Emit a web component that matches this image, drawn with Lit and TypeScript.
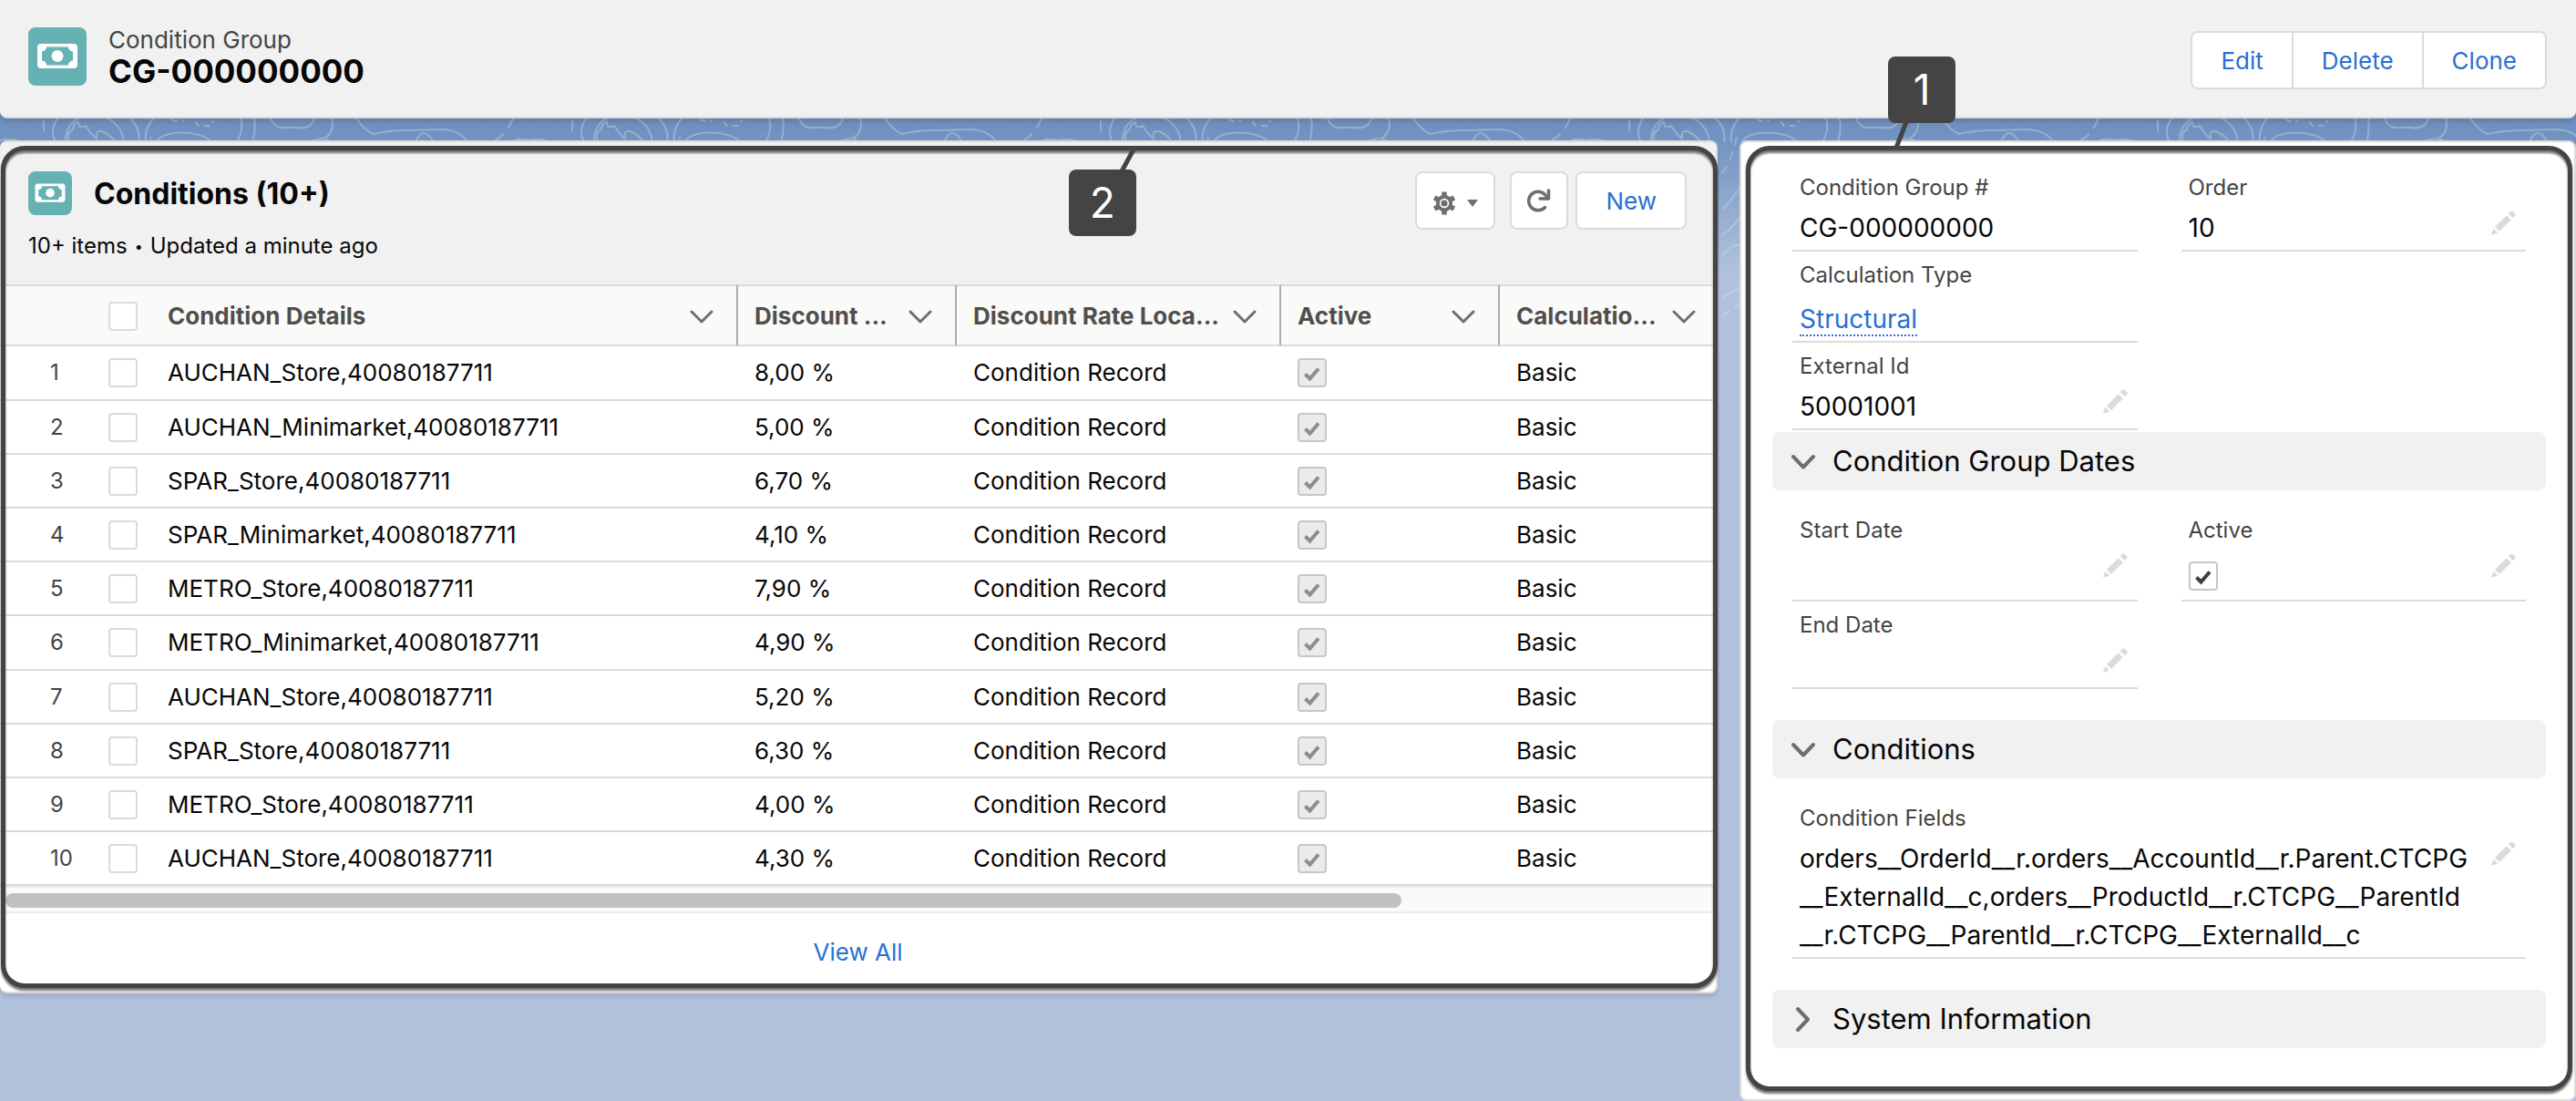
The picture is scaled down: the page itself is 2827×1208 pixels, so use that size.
import { LitElement, html, svg, css, nothing } from "lit";
import type { TemplateResult } from "lit";
import { customElement, property } from "lit/decorators.js";

interface ConditionRow {
  name: string;
  rate: string;
}

const ROWS: ConditionRow[] = [
  { name: "AUCHAN_Store,40080187711", rate: "8,00 %" },
  { name: "AUCHAN_Minimarket,40080187711", rate: "5,00 %" },
  { name: "SPAR_Store,40080187711", rate: "6,70 %" },
  { name: "SPAR_Minimarket,40080187711", rate: "4,10 %" },
  { name: "METRO_Store,40080187711", rate: "7,90 %" },
  { name: "METRO_Minimarket,40080187711", rate: "4,90 %" },
  { name: "AUCHAN_Store,40080187711", rate: "5,20 %" },
  { name: "SPAR_Store,40080187711", rate: "6,30 %" },
  { name: "METRO_Store,40080187711", rate: "4,00 %" },
  { name: "AUCHAN_Store,40080187711", rate: "4,30 %" },
];

const COLUMNS = [
  "Condition Details",
  "Discount ...",
  "Discount Rate Loca...",
  "Active",
  "Calculatio...",
];

const cashIcon = svg`
  <rect x="10" y="18" width="44" height="27" rx="4" fill="#fff"></rect>
  <path d="M20 21.500h24a5 5 0 0 0 5 5v10a5 5 0 0 0-5 5H20a5 5 0 0 0-5-5v-10a5 5 0 0 0 5-5z" fill="#65b1b4"></path>
  <circle cx="32" cy="31.500" r="6.500" fill="#fff"></circle>`;

const base = css`
  * {
    box-sizing: border-box;
  }
  button {
    font: inherit;
    margin: 0;
    padding: 0;
    border: 0;
    background: none;
    cursor: pointer;
  }
  a {
    color: #2a6fd1;
    text-decoration: none;
  }
  h1,
  h2,
  h3,
  p,
  dl,
  dd,
  dt {
    margin: 0;
    font-weight: 400;
  }
  svg {
    display: block;
    flex: none;
  }
  input[type="checkbox"] {
    appearance: none;
    display: block;
    flex: none;
    width: 32px;
    height: 32px;
    margin: 0;
    border: 2px solid #dcdbda;
    border-radius: 4px;
    background: #fff;
  }
`;

/** Square teal object icon with the banknote symbol. */
@customElement("object-icon")
export class ObjectIcon extends LitElement {
  static styles = css`
    :host {
      display: block;
      flex: none;
      width: 64px;
      height: 64px;
      border-radius: 8px;
      background: #65b1b4;
    }
    :host([small]) {
      width: 48px;
      height: 48px;
    }
    svg {
      display: block;
      width: 100%;
      height: 100%;
    }
  `;
  render() {
    return html`<svg viewBox="0 0 64 64" aria-hidden="true">${cashIcon}</svg>`;
  }
}

/** Numbered callout: an outline round its parent panel and a badge tied to it by a line. */
@customElement("panel-callout")
export class PanelCallout extends LitElement {
  @property() label = "";
  @property({ reflect: true }) placement = "inside";

  static styles = css`
    :host {
      position: absolute;
      inset: 4px -2px 4px 1px;
      pointer-events: none;
    }
    :host([placement="above"]) {
      inset: 4px 2px 9px 5px;
    }
    .outline {
      position: absolute;
      inset: 0;
      border: 5px solid #444;
      border-radius: 26px;
      filter: drop-shadow(0 3px 1px rgba(60, 60, 60, 0.7));
    }
    .badge {
      position: absolute;
      left: 62.2%;
      top: 26px;
      width: 74px;
      height: 73px;
      border-radius: 8px;
      background: #444;
      color: #fff;
      font-size: 46px;
      line-height: 73px;
      text-align: center;
    }
    .line {
      position: absolute;
      left: 56px;
      top: -22px;
      overflow: visible;
    }
    :host([placement="above"]) .badge {
      left: 156px;
      top: -98px;
    }
    :host([placement="above"]) .line {
      left: 0;
      top: 72px;
    }
  `;
  render() {
    const up = this.placement === "above";
    return html`<div class="outline"></div>
      <div class="badge">
        ${this.label}
        <svg class="line" width="20" height="26" aria-hidden="true">
          <path d=${up ? "M20 0L9 28" : "M2 24L15 0"} stroke="#444" stroke-width="5"></path>
        </svg>
      </div>`;
  }
}

/** Grey collapsible heading in the detail panel. */
@customElement("section-heading")
export class SectionHeading extends LitElement {
  @property() label = "";
  @property({ type: Boolean }) collapsed = false;

  static styles = [
    base,
    css`
      :host {
        display: block;
      }
      .bar {
        display: flex;
        align-items: center;
        gap: 18px;
        width: 100%;
        height: 64px;
        padding: 0 20px;
        border-radius: 8px;
        background: #f1f1f1;
        color: #080707;
        font-size: 31px;
        line-height: 40px;
      }
    `,
  ];
  render() {
    return html`<h3>
      <button class="bar" type="button" aria-expanded=${this.collapsed ? "false" : "true"}>
        <svg width="28" height="28" viewBox="0 0 28 28" fill="none" stroke="#706e6b" stroke-width="4" stroke-linecap="round" stroke-linejoin="round" aria-hidden="true">
          <path d=${this.collapsed ? "M8 3l11 11.500L8 26" : "M3 9l11 11.500L25 9"}></path>
        </svg>
        ${this.label}
      </button>
    </h3>`;
  }
}

/** The related list of conditions. */
@customElement("conditions-list")
export class ConditionsList extends LitElement {
  static styles = [
    base,
    css`
      :host {
        display: block;
        position: relative;
        min-width: 0;
        border: 2px solid #dddbda;
        border-left: 0;
        border-radius: 8px;
        background: #fff;
        box-shadow: 0 4px 4px rgba(0, 0, 0, 0.1);
      }
      .card {
        overflow: hidden;
        border-radius: 8px;
      }
      .head {
        display: flex;
        justify-content: space-between;
        align-items: flex-start;
        padding: 32px 32px 26px 31px;
        background: #f1f1f1;
      }
      .title {
        display: flex;
        align-items: center;
        gap: 24px;
        margin-bottom: 18px;
      }
      h2 {
        padding-top: 2px;
        color: #080707;
        font-size: 32px;
        line-height: 40px;
        font-weight: 700;
      }
      .status {
        display: flex;
        align-items: center;
        gap: 8px;
        color: #080707;
        font-size: 24px;
        line-height: 32px;
      }
      .dot {
        font-size: 16px;
      }
      .actions {
        display: flex;
        gap: 8px;
      }
      .btn {
        display: flex;
        align-items: center;
        justify-content: center;
        gap: 12px;
        height: 64px;
        border: 2px solid #dddbda;
        border-radius: 8px;
        background: #fff;
        color: #2a6fd1;
        font-size: 26px;
      }
      .gear {
        width: 88px;
        margin-right: 8px;
        padding-top: 6px;
      }
      .refresh {
        width: 64px;
      }
      .new {
        padding: 0 31px;
      }
      table {
        width: calc(100% + 3px);
        table-layout: fixed;
        border-collapse: separate;
        border-spacing: 0;
        color: #080707;
        font-size: 26px;
        line-height: 36px;
      }
      .c-num {
        width: 101px;
      }
      .c-check {
        width: 65px;
      }
      .c-std {
        width: 240px;
      }
      .c-wide {
        width: 356px;
      }
      th,
      td {
        height: 59px;
        padding: 0 18px;
        border-bottom: 2px solid #dddbda;
        text-align: left;
        font-weight: 400;
        white-space: nowrap;
      }
      tr:nth-child(5n + 1) td {
        height: 60px;
      }
      thead th {
        height: 68px;
        padding-top: 2px;
        padding-right: 0;
        border-top: 2px solid #dddbda;
        background: #fafaf9;
        color: #514f4d;
        font-weight: 700;
      }
      .ruled {
        border-right: 2px solid #aeacaa;
      }
      .label {
        display: flex;
        align-items: center;
        justify-content: space-between;
        padding-right: 25px;
      }
      td.num {
        padding: 0 0 0 55px;
        color: #444;
        font-size: 24px;
      }
      input:disabled {
        border-color: #c9c7c5;
        background-color: #ecebea;
      }
      .tick {
        display: grid;
        width: 32px;
      }
      .tick > * {
        grid-area: 1 / 1;
      }
      .track {
        padding: 6px 0 4px 6px;
        border-top: 2px solid #ececec;
        border-bottom: 2px solid #ececec;
        background: #fafafa;
      }
      .thumb {
        width: 81.6%;
        height: 16px;
        border-radius: 8px;
        background: #c1c1c1;
      }
      .foot {
        padding: 25px 0;
        text-align: center;
        font-size: 26px;
        line-height: 36px;
      }
    `,
  ];

  private chevron() {
    return html`<svg width="26" height="26" viewBox="0 0 26 26" fill="none" stroke="#706e6b" stroke-width="3" stroke-linecap="round" stroke-linejoin="round" aria-hidden="true">
      <path d="M2 8l11 11L24 8"></path>
    </svg>`;
  }

  render() {
    return html`
      <div class="card">
        <div class="head">
          <div>
            <div class="title">
              <object-icon small></object-icon>
              <h2>Conditions (10+)</h2>
            </div>
            <p class="status">10+ items <span class="dot">•</span> Updated a minute ago</p>
          </div>
          <div class="actions">
            <button class="btn gear" type="button" aria-label="List settings">
              <svg width="26" height="26" viewBox="0 0 26 26" fill="none" stroke="#706e6b" aria-hidden="true">
                <path d="M13 0.500V6M13 20V25.500M2.200 6.800L7 9.500M19 16.500L23.800 19.200M2.200 19.200L7 16.500M19 9.500L23.800 6.800" stroke-width="5.500" stroke-linecap="butt"></path>
                <circle cx="13" cy="13" r="7.200" stroke-width="4"></circle>
                <circle cx="13" cy="13" r="3.600" fill="#706e6b" stroke="none"></circle>
              </svg>
              <svg width="12" height="8" viewBox="0 0 12 8" aria-hidden="true"><path d="M0 0h12L6 8z" fill="#706e6b"></path></svg>
            </button>
            <button class="btn refresh" type="button" aria-label="Refresh">
              <svg width="26" height="36" viewBox="0 0 26 36" fill="none" stroke="#706e6b" aria-hidden="true">
                <path d="M19.500 25.500A10.300 10.300 0 1 1 19.500 11.500" stroke-width="3.500" stroke-linecap="round"></path>
                <path d="M23.500 7V16H14" stroke-width="3.500" stroke-linecap="round" stroke-linejoin="round"></path>
                <path d="M23 10V16H17z" fill="#706e6b" stroke="none"></path>
              </svg>
            </button>
            <button class="btn new" type="button">New</button>
          </div>
        </div>
        <table>
          <colgroup>
            <col class="c-num" />
            <col class="c-check" />
            <col />
            <col class="c-std" />
            <col class="c-wide" />
            <col class="c-std" />
            <col class="c-std" />
          </colgroup>
          <thead>
            <tr>
              <th></th>
              <th><input type="checkbox" aria-label="Select all" /></th>
              ${COLUMNS.map(
                (c, i) => html`<th scope="col" class=${i < 4 ? "ruled" : nothing}>
                  <div class="label">${c}${this.chevron()}</div>
                </th>`,
              )}
            </tr>
          </thead>
          <tbody>
            ${ROWS.map(
              (r, i) => html`<tr>
                <td class="num">${i + 1}</td>
                <td><input type="checkbox" aria-label="Select ${r.name}" /></td>
                <td>${r.name}</td>
                <td>${r.rate}</td>
                <td>Condition Record</td>
                <td>
                  <div class="tick">
                    <input type="checkbox" checked disabled aria-label="Active" />
                    <svg width="32" height="32" viewBox="0 0 32 32" fill="none" stroke="#8f8d8b" stroke-width="4" aria-hidden="true">
                      <path d="M8.500 17.500l5 5L23 11.500"></path>
                    </svg>
                  </div>
                </td>
                <td>Basic</td>
              </tr>`,
            )}
          </tbody>
        </table>
        <div class="track"><div class="thumb"></div></div>
        <div class="foot"><a href="#all">View All</a></div>
      </div>
      <panel-callout label="2"></panel-callout>
    `;
  }
}

/** Record details, grouped in sections. */
@customElement("record-details")
export class RecordDetails extends LitElement {
  static styles = [
    base,
    css`
      :host {
        display: block;
        position: relative;
        min-width: 0;
        padding: 24px 31px 56px 34px;
        border: 2px solid #dddbda;
        border-radius: 8px;
        background: #fff;
      }
      .fields {
        display: grid;
        grid-template-columns: minmax(0, 1fr) minmax(0, 1fr);
        column-gap: 48px;
        padding: 0 22px;
      }
      .first {
        padding-bottom: 2px;
      }
      .group {
        padding-top: 18px;
        padding-bottom: 34px;
      }
      .field {
        grid-column: 1;
        display: flex;
        flex-direction: column;
        min-height: 96px;
        padding: 8px 8px 3px;
        border-bottom: 2px solid #dddbda;
      }
      .right {
        grid-column: 2;
      }
      .full {
        grid-column: 1 / -1;
      }
      dt {
        margin-bottom: 5px;
        color: #444;
        font-size: 24px;
        line-height: 36px;
      }
      dd {
        display: flex;
        justify-content: space-between;
        align-items: flex-start;
        gap: 16px;
        min-height: 42px;
        color: #080707;
        font-size: 28px;
        line-height: 42px;
      }
      .linked {
        padding: 8px 0 2px;
      }
      .linked a {
        line-height: 34px;
        border-bottom: 2px dotted #2a6fd1;
      }
      .edit {
        margin: 2px 3px 0 0;
      }
      .check {
        display: grid;
        width: 32px;
        margin: 11px 0 7px;
      }
      .check > * {
        grid-area: 1 / 1;
      }
      .check input {
        border-color: #c9c7c5;
      }
    `,
  ];

  private pencil(field: string) {
    return html`<button class="edit" type="button" aria-label="Edit ${field}">
      <svg width="28" height="28" viewBox="0 0 28 28" fill="#dddbda" aria-hidden="true">
        <path d="M19.800 3.200l2.300-2.300a1.800 1.800 0 0 1 2.600 0l2.400 2.400a1.800 1.800 0 0 1 0 2.600l-2.300 2.300z"></path>
        <path d="M17.800 5.200l5 5L10 23l-5-5z"></path>
        <path d="M3.400 19.700l4.900 4.900-5.800 2a1 1 0 0 1-1.200-1.200z"></path>
      </svg>
    </button>`;
  }

  private field(label: string, value: unknown, edit: boolean, cls = "") {
    return html`<div class="field ${cls}">
      <dt>${label}</dt>
      <dd><span>${value}</span>${edit ? this.pencil(label) : nothing}</dd>
    </div>`;
  }

  render(): TemplateResult {
    return html`
      <dl class="fields first">
        ${this.field("Condition Group #", "CG-000000000", false)}
        ${this.field("Order", "10", true, "right")}
        <div class="field">
          <dt>Calculation Type</dt>
          <dd class="linked"><a href="#structural">Structural</a></dd>
        </div>
        ${this.field("External Id", "50001001", true)}
      </dl>
      <section-heading label="Condition Group Dates"></section-heading>
      <dl class="fields group">
        ${this.field("Start Date", "", true)}
        ${this.field(
          "Active",
          html`<span class="check">
            <input type="checkbox" checked aria-label="Active" />
            <svg width="32" height="32" viewBox="0 0 32 32" fill="none" stroke="#3e3e3c" stroke-width="4" aria-hidden="true">
              <path d="M8.500 17.500l5 5L23 11.500"></path>
            </svg>
          </span>`,
          true,
          "right",
        )}
        ${this.field("End Date", "", true)}
      </dl>
      <section-heading label="Conditions"></section-heading>
      <dl class="fields group">
        ${this.field(
          "Condition Fields",
          html`orders__OrderId__r.orders__AccountId__r.Parent.CTCPG<wbr />__ExternalId__c,orders__ProductId__r.CTCPG__ParentId<wbr />__r.CTCPG__ParentId__r.CTCPG__ExternalId__c`,
          true,
          "full",
        )}
      </dl>
      <section-heading label="System Information" collapsed></section-heading>
      <panel-callout label="1" placement="above"></panel-callout>
    `;
  }
}

@customElement("app-root")
export class AppRoot extends LitElement {
  static styles = [
    base,
    css`
      :host {
        display: block;
        position: relative;
        min-height: 100vh;
        overflow: hidden;
        background: #b2c2dd linear-gradient(#6d8fbd 0, #6d8fbd 130px, #7394c1 154px, #b2c2dd 300px) no-repeat;
        font-family: Inter, "Liberation Sans", sans-serif;
        color: #080707;
      }
      .contours {
        position: absolute;
        inset: 130px 0 auto 0;
        width: 100%;
        height: 240px;
      }
      header {
        position: relative;
        display: flex;
        align-items: flex-start;
        gap: 24px;
        padding: 28px 32px 30px 31px;
        border-bottom: 2px solid #dddbda;
        border-radius: 0 0 8px 8px;
        background: #f1f1f1;
        box-shadow: 0 4px 4px rgba(0, 0, 0, 0.1);
      }
      header object-icon {
        margin-top: 2px;
      }
      .names {
        flex: 1;
      }
      .kind {
        color: #444;
        font-size: 26px;
        line-height: 32px;
      }
      h1 {
        font-size: 35px;
        line-height: 36px;
        font-weight: 700;
      }
      .group {
        display: flex;
        height: 64px;
        margin-top: 6px;
        border: 2px solid #dddbda;
        border-radius: 8px;
        background: #fff;
      }
      .group button {
        padding: 0 31px;
        color: #2a6fd1;
        font-size: 26px;
      }
      .group button + button {
        border-left: 2px solid #dddbda;
      }
      main {
        position: relative;
        display: grid;
        grid-template-columns: minmax(0, 269fr) minmax(0, 131fr);
        align-items: start;
        gap: 24px;
        padding-top: 24px;
      }
    `,
  ];

  render() {
    return html`
      <svg class="contours" aria-hidden="true">
        <defs>
          <pattern id="map" width="580" height="240" patternUnits="userSpaceOnUse">
            <g fill="none" stroke="#fff" stroke-opacity=".26" stroke-width="2">
              <path d="M63 0Q54 14 61 26M72 26C70-14 132-14 136 26"></path>
              <path d="M76 26q-4-10 4-14q0-6 6-8q0 8 8 4q8 12 12 14q-2-10 6-8q12 6 14 12"></path>
              <path d="M143 0q12 12 9 26M168 0q-10 12-8 26M264 0q4 12-4 26M279 0q2 14-2 26"></path>
              <path d="M172 26c4-14 50-14 60 0M297 0c6 16 20 8 28 10c10 2 18-2 20-10M364 0q4 14-8 22q6 2 8 6M356 22q-10 0-22 6"></path>
              <path d="M391 0q12 16 20 17c14-6 60-4 76-5q20 2 26 14M456 26q8-20 20 0M580 24q-14-4-20 4M0 24q18-3 26 4"></path>
              <path d="M48 2v18M563 0q-8 20-24 26" stroke-dasharray="12 8"></path>
              <path d="M188 1l8 3l6-2M214 3l4 5h14l2-6" stroke-dasharray="7 5"></path>
              <path d="M186 30q-10 46-36 70M194 44q-10 60-44 84M150 150q18-22 40-2M150 196q24-10 40-30" stroke-opacity=".2"></path>
              <path d="M166 20q-6 30-20 44M150 216q20-10 38-32" stroke-dasharray="10 7" stroke-opacity=".2"></path>
            </g>
          </pattern>
        </defs>
        <rect width="100%" height="100%" fill="url(#map)"></rect>
      </svg>
      <header>
        <object-icon></object-icon>
        <div class="names">
          <p class="kind">Condition Group</p>
          <h1>CG-000000000</h1>
        </div>
        <div class="group">
          <button type="button">Edit</button>
          <button type="button">Delete</button>
          <button type="button">Clone</button>
        </div>
      </header>
      <main>
        <conditions-list></conditions-list>
        <record-details></record-details>
      </main>
    `;
  }
}
